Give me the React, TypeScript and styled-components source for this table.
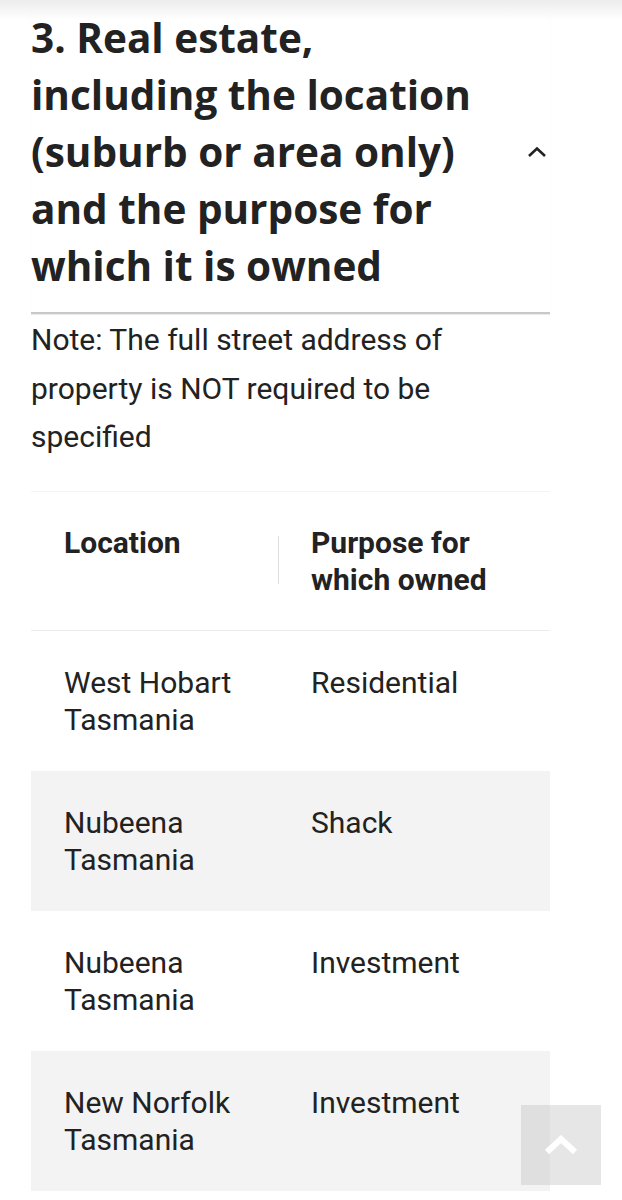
import React from 'react';
import styled, {createGlobalStyle} from 'styled-components';

const GlobalStyle = createGlobalStyle`
  html, body {
    margin: 0;
    padding: 0;
    background: #fff;
  }
  body {
    font-family: Roboto, "Liberation Sans", sans-serif;
    color: #222;
  }
`;

const Page = styled.div`
  position: relative;
  min-height: 1200px;
  overflow: hidden;

  /* faint header shadow at the very top */
  &::before {
    content: '';
    position: absolute;
    left: 0;
    right: 0;
    top: 0;
    height: 20px;
    background: linear-gradient(#ececec, rgba(255, 255, 255, 0));
  }
`;

const Section = styled.section`
  width: 519px;
  margin-left: 31px;
  padding-top: 9px;
`;

const Header = styled.div`
  display: flex;
  align-items: center;
  justify-content: space-between;
  padding-bottom: 18px;
  border-bottom: 2px solid #c8c8c8;
  box-shadow: 0 1px 1px rgba(0, 0, 0, 0.08);
`;

const Title = styled.h2`
  margin: 0;
  font-family: "Open Sans", sans-serif;
  font-weight: 700;
  font-size: 40.5px;
  line-height: 57px;
  color: #222;
  width: 462px;
`;

const Toggle = styled.button`
  display: flex;
  align-items: center;
  justify-content: center;
  width: 30px;
  height: 30px;
  margin-right: -2px;
  padding: 0;
  border: none;
  background: none;
  color: #222;
`;

const Note = styled.p`
  margin: 2px 0 0;
  font-size: 30px;
  line-height: 48.5px;
  color: #222;
`;

const Table = styled.table`
  width: 100%;
  margin-top: 29px;
  border-collapse: collapse;
  border-top: 1px solid #f4f4f4;
`;

const HeadCell = styled.th<{$width?: number}>`
  box-sizing: border-box;
  width: ${({$width}) => ($width ? `${$width}px` : 'auto')};
  padding: 32px 20px 32px 33px;
  font-weight: 700;
  font-size: 30px;
  line-height: 37px;
  text-align: left;
  vertical-align: top;
  border-bottom: 1px solid #ececec;
`;

/* thin divider drawn inside the second header cell */
const HeadDivider = styled.div`
  position: relative;

  &::before {
    content: '';
    position: absolute;
    left: -33px;
    top: 12px;
    height: 48px;
    width: 1px;
    background: #dedede;
  }
`;

const Row = styled.tr<{$shaded: boolean}>`
  background: ${({$shaded}) => ($shaded ? '#f3f3f3' : '#fff')};
`;

const Cell = styled.td`
  height: 140px;
  box-sizing: border-box;
  padding: 33px 20px 33px 33px;
  font-size: 30px;
  line-height: 37px;
  vertical-align: top;
  color: #222;
`;

const BackToTop = styled.button`
  position: absolute;
  left: 521px;
  top: 1105px;
  width: 80px;
  height: 80px;
  display: flex;
  align-items: center;
  justify-content: center;
  padding: 0;
  border: none;
  background: rgba(200, 200, 200, 0.45);
`;

const rows = [
  {location: ['West Hobart', 'Tasmania'], purpose: 'Residential'},
  {location: ['Nubeena', 'Tasmania'], purpose: 'Shack'},
  {location: ['Nubeena', 'Tasmania'], purpose: 'Investment'},
  {location: ['New Norfolk', 'Tasmania'], purpose: 'Investment'},
];

export default function App() {
  return (
    <Page>
      <GlobalStyle />
      <Section>
        <Header>
          <Title>
            3. Real estate, including the location (suburb or area only) and the purpose for
            which it is owned
          </Title>
          <Toggle aria-label="Collapse">
            <svg width="20" height="12" viewBox="0 0 20 12" fill="none">
              <path d="M2 10 L10 2.5 L18 10" stroke="#222" strokeWidth="2.6" />
            </svg>
          </Toggle>
        </Header>

        <Note>Note: The full street address of property is NOT required to be specified</Note>

        <Table>
          <thead>
            <tr>
              <HeadCell $width={247}>Location</HeadCell>
              <HeadCell>
                <HeadDivider>
                  Purpose for
                  <br />
                  which owned
                </HeadDivider>
              </HeadCell>
            </tr>
          </thead>
          <tbody>
            {rows.map((row, i) => (
              <Row key={i} $shaded={i % 2 === 1}>
                <Cell>
                  {row.location[0]}
                  <br />
                  {row.location[1]}
                </Cell>
                <Cell>{row.purpose}</Cell>
              </Row>
            ))}
          </tbody>
        </Table>
      </Section>

      <BackToTop aria-label="Back to top">
        <svg width="34" height="20" viewBox="0 0 34 20" fill="none">
          <path d="M3 17 L17 4 L31 17" stroke="#fff" strokeWidth="6" />
        </svg>
      </BackToTop>
    </Page>
  );
}
